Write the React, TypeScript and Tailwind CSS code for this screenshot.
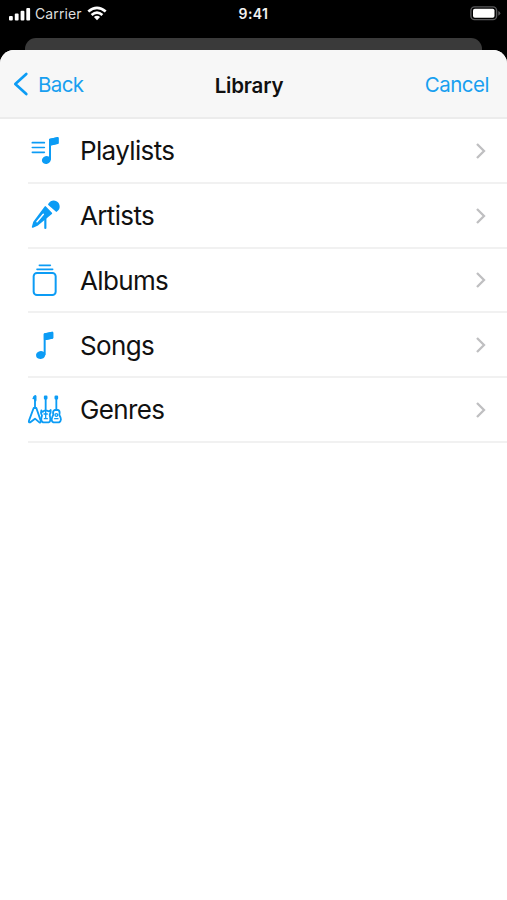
import type { ReactNode } from "react";

const BLUE = "#0c9cf5";

function Icon({ children }: { children: ReactNode }) {
  return (
    <svg className="h-[52px] w-[60px] shrink-0" viewBox="0 0 180 156" fill="none" stroke={BLUE} strokeLinecap="round" strokeLinejoin="round">
      {children}
    </svg>
  );
}

const PlaylistsIcon = (
  <Icon>
    <path d="M37 53H73M37 67.500H73M37 82H73" strokeWidth="5" />
    <path d="M90 103V44L113 39V54L90 59" strokeWidth="6" />
    <path d="M90 44L113 39V54L90 59Z" fill={BLUE} strokeWidth="5" />
    <ellipse cx="79" cy="105" rx="13.500" ry="11.500" transform="rotate(-15 79 105)" fill={BLUE} stroke="none" />
  </Icon>
);

const ArtistsIcon = (
  <Icon>
    <path d="M76 51L42 97L38 111L53 104L94 70Z" fill={BLUE} strokeWidth="5" />
    <path d="M70 73L51 95" stroke="#fff" strokeWidth="4.500" />
    <path d="M76 84V114" strokeWidth="6.500" />
    <path d="M84 44A18 18 0 1 1 109 66Z" fill={BLUE} stroke="none" />
    <path d="M81 47L104 69" stroke="#fff" strokeWidth="2.500" />
  </Icon>
);

const AlbumsIcon = (
  <Icon>
    <rect x="41" y="54" width="66" height="66" rx="10" strokeWidth="6" />
    <path d="M58 31H91M51 43H98" strokeWidth="5" />
  </Icon>
);

const SongsIcon = (
  <Icon>
    <path d="M74 103V43L97 38V53L74 58" strokeWidth="6" />
    <path d="M74 43L97 38V53L74 58Z" fill={BLUE} strokeWidth="5" />
    <ellipse cx="62" cy="105" rx="14" ry="12" transform="rotate(-15 62 105)" fill={BLUE} stroke="none" />
  </Icon>
);

const GenresIcon = (
  <Icon>
    <path d="M45 72V38L40 43M77 78V40M109 75V40" strokeWidth="5.500" />
    <path d="M43 39L46 37V49M75 38H79V43H75ZM107 38H111V43H107Z" strokeWidth="7" />
    <path d="M41 72L27 110Q25 116 31 115L45 104L58 115Q64 117 62 110L49 72Z" strokeWidth="5.500" />
    <path d="M64 79Q67 87 73 80H82Q88 84 92 78Q93 86 89 92Q94 113 86 115H69Q60 110 66 95Q61 86 64 79Z" strokeWidth="5.500" />
    <path d="M72 90H82M77 80V103M73 104H82" strokeWidth="4" />
    <path d="M104 78Q97 81 100 92Q90 111 100 115H117Q128 109 118 93Q121 80 114 78Z" strokeWidth="5.500" />
    <circle cx="109" cy="93" r="4" strokeWidth="4" />
    <path d="M104 104H114" strokeWidth="4" />
  </Icon>
);

const rows = [
  { label: "Playlists", icon: PlaylistsIcon },
  { label: "Artists", icon: ArtistsIcon },
  { label: "Albums", icon: AlbumsIcon },
  { label: "Songs", icon: SongsIcon },
  { label: "Genres", icon: GenresIcon },
];

function StatusBar() {
  return (
    <div className="grid h-[38px] grid-cols-3 items-start text-white">
      <div className="flex items-center pl-[9px] pt-[5px]">
        <svg className="-mt-[2px]" width="22" height="15" viewBox="0 0 22 15" fill="#fff">
          <rect x="0" y="10" width="3.800" height="4.500" rx="1" />
          <rect x="5.800" y="7.500" width="3.800" height="7" rx="1" />
          <rect x="11.600" y="4.800" width="3.800" height="9.700" rx="1" />
          <rect x="17.300" y="2" width="3.800" height="12.500" rx="1" />
        </svg>
        <span className="ml-[4px] text-[14px] leading-[18px] tracking-[0.1px] text-[#dedede]">Carrier</span>
        <svg className="-mt-[2px] ml-[5px]" width="20" height="15" viewBox="0 0 20 15" fill="none" stroke="#fff" strokeWidth="2.700">
          <path d="M1.300 5.600Q10 -1.900 18.700 5.600M4.600 9Q10 4.300 15.400 9" />
          <path d="M6.900 11.100Q10 8.600 13.100 11.100L10 14.300Z" fill="#fff" stroke="none" />
        </svg>
      </div>
      <div className="pt-[5px] text-center text-[14px] font-semibold leading-[18px] tracking-[0.4px] text-[#f2f2f2]">9:41</div>
      <div className="flex justify-end pr-[6px] pt-[6px]">
        <svg width="31" height="15" viewBox="0 0 31 15">
          <rect x="0.900" y="0.900" width="25.700" height="12.700" rx="3.600" fill="none" stroke="#59595b" strokeWidth="1.400" />
          <rect x="3" y="2.800" width="21.500" height="8.900" rx="1.800" fill="#fff" />
          <path d="M28.300 5V9.700Q30.300 8.800 30.300 7.300T28.300 5Z" fill="#59595b" />
        </svg>
      </div>
    </div>
  );
}

export default function App() {
  return (
    <div className="flex h-[900px] w-[507px] flex-col overflow-hidden bg-black font-['Inter','Liberation_Sans',sans-serif]">
      <StatusBar />
      <div className="mx-[25px] h-[12px] shrink-0 rounded-t-[11px] bg-[#3a3a3a]" />
      <main className="flex-1 overflow-hidden rounded-t-[14px] bg-white">
        <header className="grid h-[69px] grid-cols-3 items-center border-b-2 border-[#ececec] bg-[#f7f7f7]">
          <button className="flex items-center pl-[13px] text-[20.5px] tracking-[-0.6px] text-[#189ff0]">
            <svg width="16" height="24" viewBox="0 0 16 24" fill="none" stroke={BLUE} strokeWidth="2.700" strokeLinecap="round" strokeLinejoin="round">
              <path d="M13.300 2L2.300 12L13.300 22" />
            </svg>
            <span className="ml-[9px] pt-[3px]">Back</span>
          </button>
          <h1 className="pr-[9px] pt-[6px] text-center text-[20.5px] font-semibold tracking-[-0.2px] text-[#101010]">Library</h1>
          <button className="pr-[18px] pt-[3px] text-right text-[20.5px] tracking-[-0.5px] text-[#189ff0]">Cancel</button>
        </header>
        <ul>
          {rows.map((row) => (
            <li key={row.label} className="flex h-[64.75px] flex-col">
              <div className="flex min-h-0 flex-1 items-center pl-[20px] pr-[20px] pt-[2px]">
                {row.icon}
                <span className="flex-1 text-[26px] leading-[32px] tracking-[-0.65px] text-[#111]">{row.label}</span>
                <svg className="-mt-px" width="13" height="18" viewBox="0 0 13 18" fill="none" stroke="#bfbfc1" strokeWidth="2.300">
                  <path d="M3 2L10 9L3 16" />
                </svg>
              </div>
              <div className="ml-[28px] h-[2px] shrink-0 bg-[#f1f1f1]" />
            </li>
          ))}
        </ul>
      </main>
    </div>
  );
}
